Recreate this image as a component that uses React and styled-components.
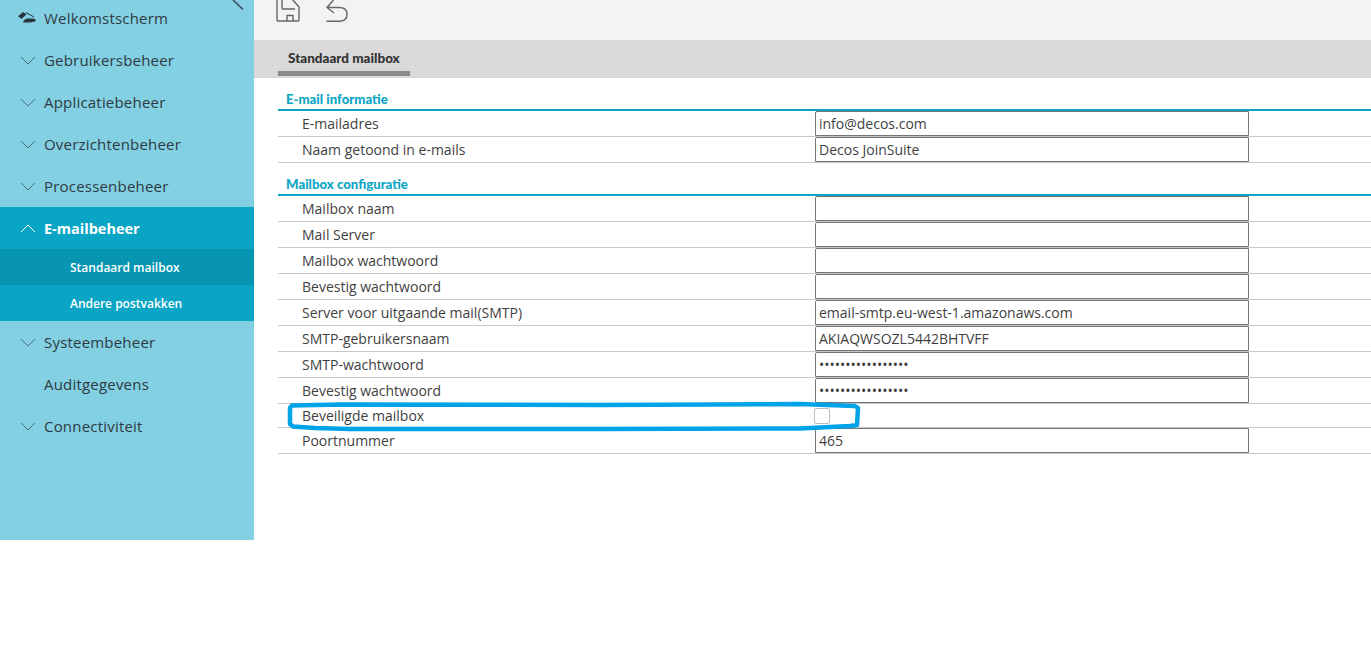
import React from "react";
import styled, { createGlobalStyle } from "styled-components";

const GlobalStyle = createGlobalStyle`
	html, body {
		margin: 0;
		padding: 0;
		background: #fff;
		overflow: hidden;
	}
	body {
		font-family: "Open Sans", "Liberation Sans", sans-serif;
		color: #3a3a3a;
	}
`;

const Page = styled.div`
	position: relative;
	display: flex;
	align-items: flex-start;
	width: 1371px;
	height: 648px;
	overflow: hidden;
`;

//Sidebar

const Sidebar = styled.nav`
	position: relative;
	width: 254px;
	height: 540px;
	flex-shrink: 0;
	background-color: #82d0e2;
	overflow: hidden;
`;

const MenuList = styled.div`
	margin-top: -3px;
`;

const MenuItem = styled.div`
	display: flex;
	align-items: center;
	height: 42px;
	padding-left: 20px;
	font-size: ${(pr) => (pr.$active ? "14.5px" : "15px")};
	font-weight: ${(pr) => (pr.$active ? 700 : 500)};
	letter-spacing: ${(pr) => (pr.$active ? "0" : "0.2px")};
	color: ${(pr) => (pr.$active ? "#fff" : "#2f3a42")};
	background-color: ${(pr) => (pr.$active ? "#0aa5c4" : "transparent")};
`;

const MenuIcon = styled.span`
	display: flex;
	align-items: center;
	width: 24px;
	flex-shrink: 0;
`;

const HomeSvg = styled.svg`
	margin: -1px 0 0 -2px;
	flex-shrink: 0;
`;

const SubItem = styled.div`
	display: flex;
	align-items: center;
	height: 36px;
	padding-left: 70px;
	font-size: 12px;
	font-weight: 600;
	color: #fff;
	background-color: ${(pr) => (pr.$selected ? "#0795b2" : "#0aa5c4")};
`;

const CollapseMark = styled.svg`
	position: absolute;
	top: 0;
	left: 232px;
`;

//Main

const Main = styled.main`
	flex: 1;
	min-width: 0;
`;

const Toolbar = styled.div`
	display: flex;
	align-items: flex-end;
	gap: 26px;
	height: 40px;
	padding: 0 0 18px 21px;
	box-sizing: border-box;
	background-color: #f3f3f3;
	overflow: hidden;
`;

const TabBar = styled.div`
	display: flex;
	height: 38px;
	padding-left: 24px;
	background-color: #d9d9d9;
`;

const Tab = styled.div`
	box-sizing: content-box;
	width: 122px;
	height: 26px;
	margin-top: 5px;
	padding: 0 0 0 10px;
	border-bottom: 5px solid #8a8a8a;
	font-family: Lato, "Liberation Sans", sans-serif;
	font-size: 13.5px;
	font-weight: 900;
	line-height: 27px;
	white-space: nowrap;
	color: #333;
`;

const Form = styled.div`
	padding: 12px 0 0 24px;
`;

const Section = styled.section`
	margin-bottom: 12px;
`;

const SectionTitle = styled.div`
	height: 19px;
	padding-left: 8px;
	border-bottom: 2px solid #0aa5c4;
	font-family: Lato, "Liberation Sans", sans-serif;
	font-size: 13.2px;
	font-weight: 900;
	line-height: 18px;
	color: #0aa5c4;
`;

const Row = styled.div`
	display: flex;
	align-items: center;
	height: ${(pr) => (pr.$short ? "23px" : "25px")};
	border-bottom: 1px solid #c8c8c8;
	font-size: 14px;
`;

const Label = styled.label`
	width: 537px;
	padding-left: 24px;
	box-sizing: border-box;
	flex-shrink: 0;
	color: #3f3f3f;
`;

const Input = styled.input`
	width: 434px;
	height: 25px;
	margin: 0;
	padding: 0 3px;
	box-sizing: border-box;
	align-self: flex-start;
	border: 1px solid #767676;
	border-radius: 2px 0 0 0;
	background: #fff;
	font-family: "Open Sans", "Liberation Sans", sans-serif;
	font-size: 14px;
	color: #3f3f3f;
	outline: none;
`;

const Checkbox = styled.span`
	display: block;
	width: 14px;
	height: 14px;
	margin-left: -1px;
	border: 1px solid #bdbdbd;
	border-radius: 2px;
	background: #fff;
`;

const Annotation = styled.svg`
	position: absolute;
	top: 400px;
	left: 285px;
	pointer-events: none;
`;

const Chevron = ({ up, color }) => (
	<svg width="16" height="9" viewBox="0 0 16 9" fill="none">
		<path
			d={up ? "M1 8 L8 1 L15 8" : "M1 1 L8 8 L15 1"}
			stroke={color}
			strokeWidth="1"
		/>
	</svg>
);

const HomeIcon = () => (
	<HomeSvg width="18" height="11" viewBox="0 0 18 11">
		<path fill="#2a343b" d="M0 4.2 L5 0 L8.5 2.2 L3.5 7 Z" />
		<path fill="none" stroke="#2a343b" d="M8 0.5 L16 5" />
		<path fill="#2a343b" d="M5 10.5 Q5.5 7.5 9 6.5 H15 Q18 7 18 9 Q14 10.5 10 10.5 Z" />
	</HomeSvg>
);

const SaveIcon = () => (
	<svg width="25" height="22" viewBox="0 0 25 22" fill="none" stroke="#666" strokeWidth="1.4">
		<path d="M2 -4 V20 Q2 21 3 21 H23 Q24 21 24 20 V7 L17 -1" />
		<path d="M7 -2 V8 Q7 9 8 9 H20" />
		<path d="M12 21 V15.5 H18 V21" />
	</svg>
);

const UndoIcon = () => (
	<svg width="22" height="22" viewBox="0 0 22 22" fill="none" stroke="#666" strokeWidth="1.4">
		<path d="M7.5 0 L1 7.5 L8 13" />
		<path d="M1.5 7.5 H13 C18 7.5 21 10 21 14 C21 18.5 18 21.3 13 21.3 H0.5" />
	</svg>
);

const menuTop = ["Gebruikersbeheer", "Applicatiebeheer", "Overzichtenbeheer", "Processenbeheer"];

const mailInfo = [
	{ label: "E-mailadres", value: "info@decos.com" },
	{ label: "Naam getoond in e-mails", value: "Decos JoinSuite" },
];

const mailConfig = [
	{ label: "Mailbox naam", value: "" },
	{ label: "Mail Server", value: "" },
	{ label: "Mailbox wachtwoord", value: "", type: "password" },
	{ label: "Bevestig wachtwoord", value: "", type: "password" },
	{ label: "Server voor uitgaande mail(SMTP)", value: "email-smtp.eu-west-1.amazonaws.com" },
	{ label: "SMTP-gebruikersnaam", value: "AKIAQWSOZL5442BHTVFF" },
	{ label: "SMTP-wachtwoord", value: "abcdefghijklmnopq", type: "password" },
	{ label: "Bevestig wachtwoord", value: "abcdefghijklmnopq", type: "password" },
];

const FieldRow = ({ field }) => (
	<Row>
		<Label>{field.label}</Label>
		<Input readOnly type={field.type || "text"} value={field.value} />
	</Row>
);

const App = () => {
	return (
		<Page>
			<GlobalStyle />
			<Sidebar>
				<MenuList>
					<MenuItem>
						<MenuIcon>
							<HomeIcon />
						</MenuIcon>
						Welkomstscherm
					</MenuItem>
					{menuTop.map((name) => (
						<MenuItem key={name}>
							<MenuIcon>
								<Chevron color="#4d6f7b" />
							</MenuIcon>
							{name}
						</MenuItem>
					))}
					<MenuItem $active>
						<MenuIcon>
							<Chevron up color="#fff" />
						</MenuIcon>
						E-mailbeheer
					</MenuItem>
					<SubItem $selected>Standaard mailbox</SubItem>
					<SubItem>Andere postvakken</SubItem>
					<MenuItem>
						<MenuIcon>
							<Chevron color="#4d6f7b" />
						</MenuIcon>
						Systeembeheer
					</MenuItem>
					<MenuItem>
						<MenuIcon />
						Auditgegevens
					</MenuItem>
					<MenuItem>
						<MenuIcon>
							<Chevron color="#4d6f7b" />
						</MenuIcon>
						Connectiviteit
					</MenuItem>
				</MenuList>
				<CollapseMark width="12" height="10" viewBox="0 0 12 10" fill="none">
					<path d="M1 0 L11 9.5" stroke="#3a4a52" strokeWidth="1.5" />
				</CollapseMark>
			</Sidebar>
			<Main>
				<Toolbar>
					<SaveIcon />
					<UndoIcon />
				</Toolbar>
				<TabBar>
					<Tab>Standaard mailbox</Tab>
				</TabBar>
				<Form>
					<Section>
						<SectionTitle>E-mail informatie</SectionTitle>
						{mailInfo.map((field) => (
							<FieldRow key={field.label} field={field} />
						))}
					</Section>
					<Section>
						<SectionTitle>Mailbox configuratie</SectionTitle>
						{mailConfig.map((field, i) => (
							<FieldRow key={i} field={field} />
						))}
						<Row $short>
							<Label>Beveiligde mailbox</Label>
							<Checkbox />
						</Row>
						<FieldRow field={{ label: "Poortnummer", value: "465" }} />
					</Section>
				</Form>
			</Main>
			<Annotation width="580" height="34" viewBox="0 0 580 34" fill="none">
				<path
					d="M7 5.5 L5 8 V24 L8 26.5 L30 28 L65 29 H315 L515 28.5 L565 26 L572 25 L573 8 L570 6 L515 4 L315 5 L55 4.5 Z"
					stroke="#00a2e8"
					strokeWidth="4.5"
					strokeLinejoin="round"
				/>
			</Annotation>
		</Page>
	);
};

export default App;
